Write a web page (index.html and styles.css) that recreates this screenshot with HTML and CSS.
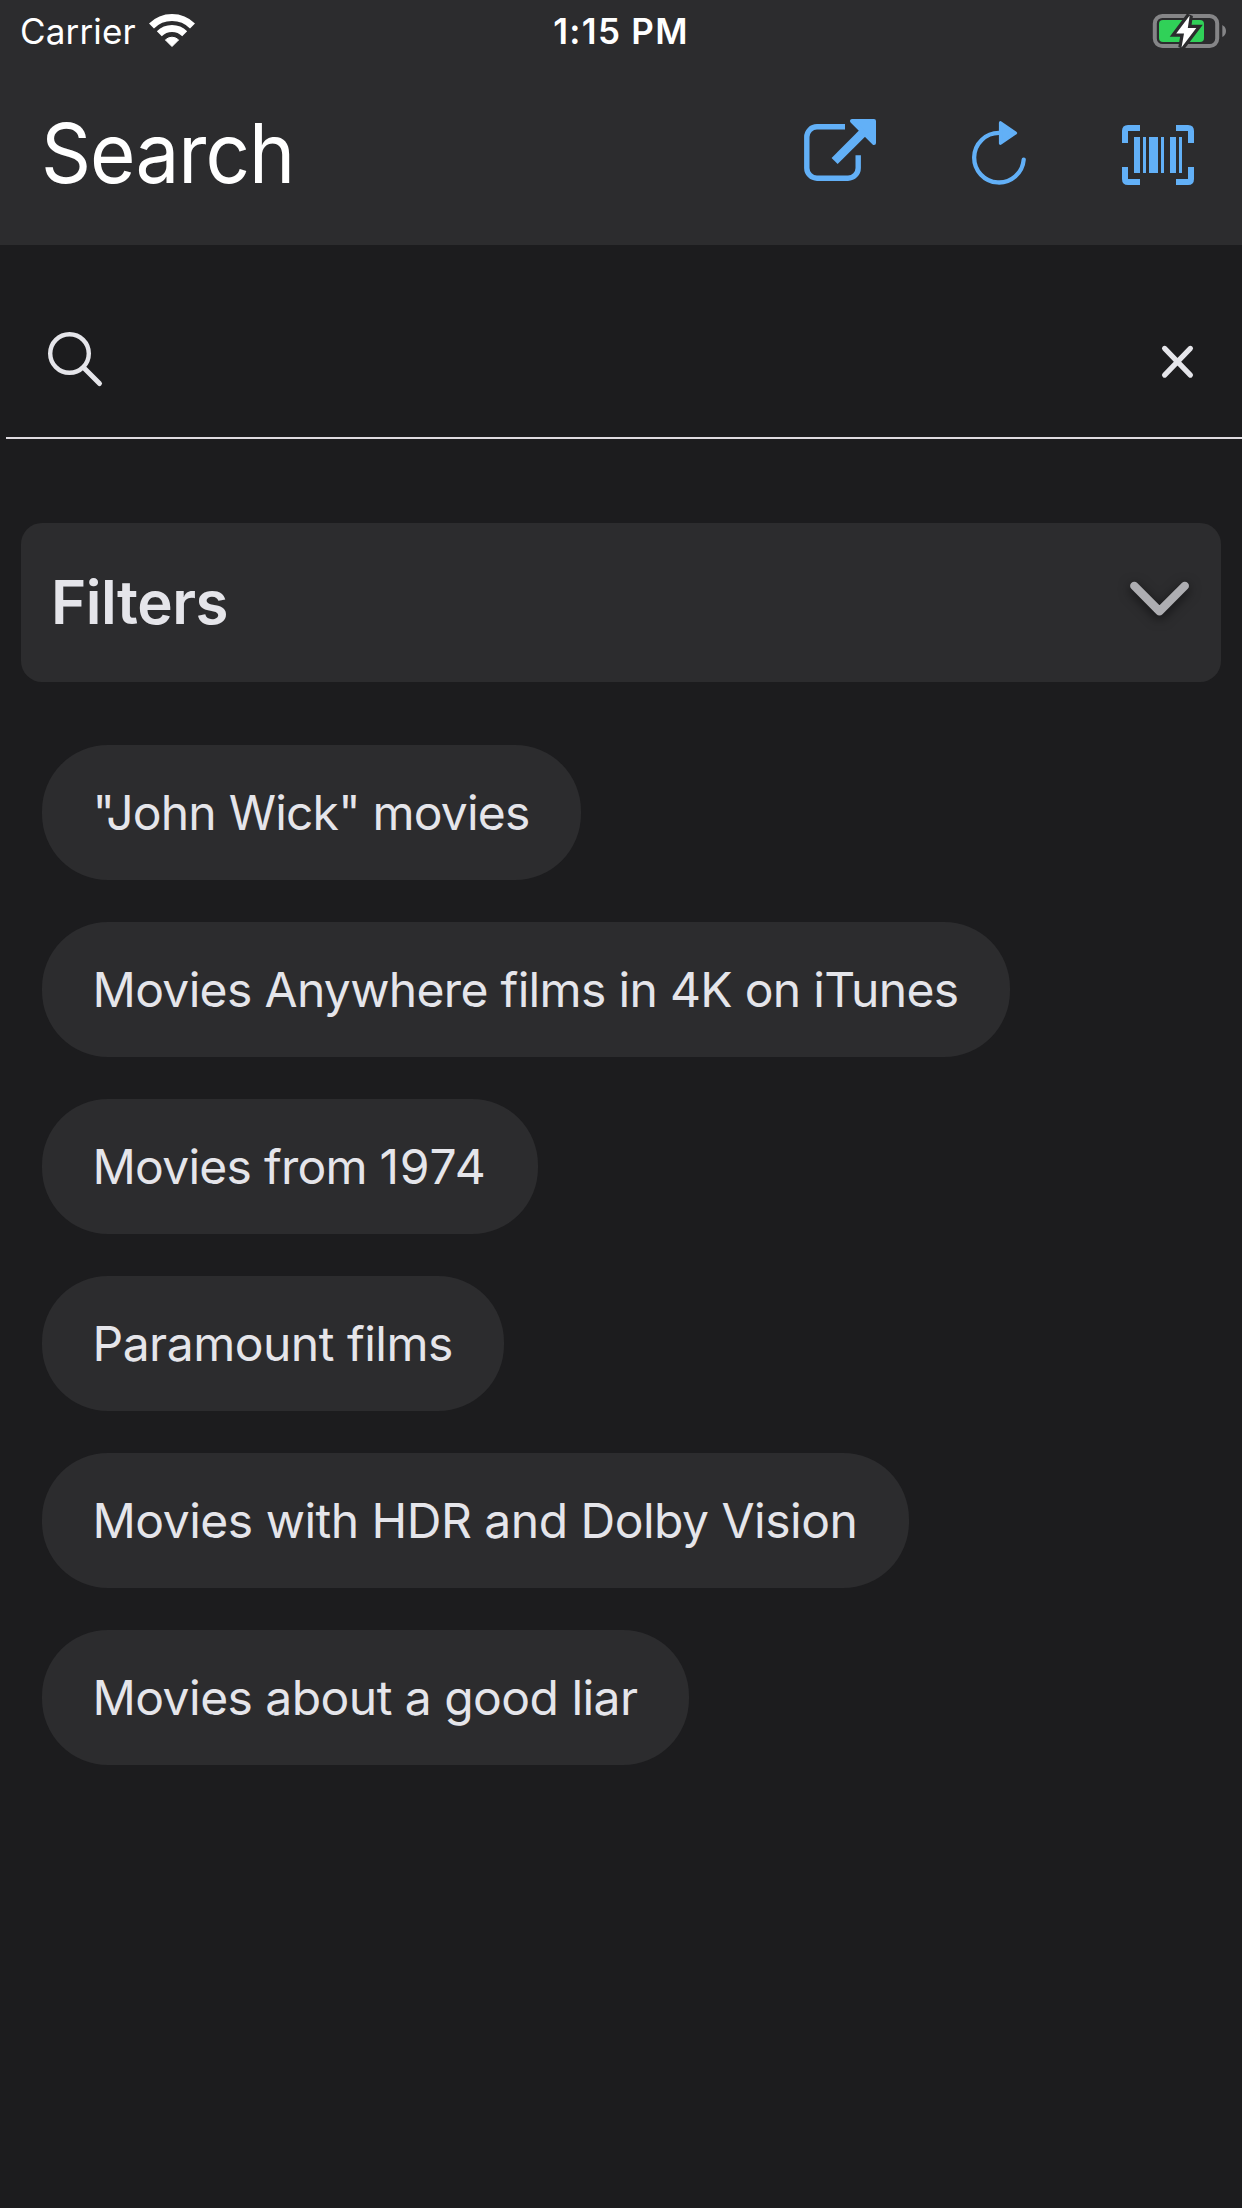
FILE: index.html
```
<!DOCTYPE html>
<html lang="en">
<head>
<meta charset="utf-8">
<title>Search</title>
<link rel="stylesheet" href="styles.css">
</head>
<body>
<header class="header">
  <div class="status">
    <div class="status-left">
      <span class="carrier">Carrier</span>
      <svg class="wifi" width="48" height="36" viewBox="148 12 48 36">
        <path d="M151.5 25A29 29 0 0 1 192.5 25M159.3 32.8A18 18 0 0 1 184.7 32.8" fill="none" stroke="#fff" stroke-width="7"/>
        <path d="M172 45.5L165.4 38.9A9.5 9.5 0 0 1 178.6 38.9Z" fill="#fff" stroke="#fff" stroke-width="1" stroke-linejoin="round"/>
      </svg>
    </div>
    <time class="clock">1:15 PM</time>
    <svg class="battery" width="76" height="38" viewBox="1152 11 76 38">
      <rect x="1154.8" y="15" width="62.4" height="30" rx="7.5" fill="none" stroke="#858587" stroke-width="4"/>
      <rect x="1159" y="19" width="45" height="22" rx="4" fill="#30d158"/>
      <path d="M1222.3 24Q1226 26 1226 30T1222.3 36Z" fill="#858587"/>
      <path d="M1189.7 14.5L1176.2 32.5H1184L1181.5 46.5L1196.3 27H1187.8Z" fill="#fff" stroke="#2c2c2e" stroke-width="6.5" paint-order="stroke"/>
    </svg>
  </div>
  <div class="nav">
    <h1 class="title">Search</h1>
    <div class="actions">
      <svg width="72" height="69" viewBox="804 118 72 69">
        <path d="M845 126.8H817A10.2 10.2 0 0 0 806.8 137V168A10.2 10.2 0 0 0 817 178.2H848A10.2 10.2 0 0 0 858.2 168V155.3" class="line" stroke-width="5.4"/>
        <path d="M834.6 161L863 132.6" class="line" stroke-width="8.6"/>
        <path d="M852 121H874V143Z" fill="#62b0f7" stroke="#62b0f7" stroke-width="4" stroke-linejoin="round"/>
      </svg>
      <svg width="54" height="69" viewBox="972 118 54 69">
        <path d="M999 132.9A24.8 24.8 0 1 0 1023.7 159.7" class="line" stroke-width="4.3" stroke-linecap="round"/>
        <path d="M1000.5 122.7L1015.5 133L1000.5 143.3Z" fill="#62b0f7" stroke="#62b0f7" stroke-width="3.2" stroke-linejoin="round"/>
      </svg>
      <svg width="72" height="69" viewBox="1122 118 72 69" shape-rendering="crispEdges">
        <path d="M1125 143V131Q1125 128 1128 128H1140M1176 128H1188Q1191 128 1191 131V143M1191 167V179Q1191 182 1188 182H1176M1140 182H1128Q1125 182 1125 179V167" class="line" stroke-width="6" shape-rendering="auto"/>
        <path d="M1134 137h6v36h-6zM1143 137h3v36h-3zM1149 137h9v36h-9zM1161 137h3v36h-3zM1170 137h6v36h-6zM1179 137h3v36h-3z" fill="#62b0f7"/>
      </svg>
    </div>
  </div>
</header>
<main>
  <div class="searchbar">
    <svg width="56" height="56" viewBox="47 331 56 56">
      <circle cx="69.5" cy="353.5" r="19.3" fill="none" stroke="#e5e5ea" stroke-width="4.4"/>
      <path d="M84 368L99.5 383.5" fill="none" stroke="#e5e5ea" stroke-width="5" stroke-linecap="round"/>
    </svg>
    <svg width="34" height="56" viewBox="1160 331 34 56">
      <path d="M1164.6 348.4L1190.4 375.1M1190.4 348.4L1164.6 375.1" fill="none" stroke="#e5e5ea" stroke-width="5.2" stroke-linecap="round"/>
    </svg>
  </div>
  <section class="filters">
    <h2 class="filters-title">Filters</h2>
    <svg class="chevron" width="60" height="36" viewBox="1130 580.5 60 36">
      <path d="M1134.3 585.4L1159.5 610.8L1184.8 585.4" fill="none" stroke="#aeaeb2" stroke-width="8.4" stroke-linecap="round" stroke-linejoin="round"/>
    </svg>
  </section>
  <div class="chips">
    <button class="chip chip-wick">"John Wick" movies</button>
    <button class="chip chip-anywhere">Movies Anywhere films in 4K on iTunes</button>
    <button class="chip chip-year">Movies from <span class="year">1974</span></button>
    <button class="chip">Paramount films</button>
    <button class="chip">Movies with HDR and Dolby Vision</button>
    <button class="chip chip-liar">Movies about a good liar</button>
  </div>
</main>
</body>
</html>
```
FILE: styles.css
```
* { box-sizing: border-box; }
body { margin: 0; min-height: 2208px; background: #1c1c1e; color: #e5e5ea; font-family: Inter, "Liberation Sans", sans-serif; }
svg { display: block; flex: none; overflow: visible; }
h1, h2 { margin: 0; }
.header { height: 245px; background: #2c2c2e; color: #fff; }
.status { height: 60px; padding: 0 14px; display: grid; grid-template-columns: 1fr auto 1fr; align-items: center; font-size: 35px; line-height: 60px; white-space: nowrap; }
.status-left { display: flex; align-items: center; gap: 12px; padding-left: 6px; }
.carrier { line-height: 62px; letter-spacing: .15px; }
.clock { font-weight: 600; line-height: 62px; letter-spacing: 1.3px; }
.battery { justify-self: end; }
.nav { height: 185px; padding: 0 48px 0 41px; display: flex; align-items: center; justify-content: space-between; }
.title { font-size: 83px; font-weight: 400; line-height: 100px; letter-spacing: -1px; transform: scaleX(.94); transform-origin: left; }
.actions { display: flex; gap: 96px; }
.line { fill: none; stroke: #62b0f7; }
.searchbar { height: 194px; margin-left: 6px; padding: 86px 48px 0 41px; display: flex; justify-content: space-between; border-bottom: 2px solid #dfdbe1; }
.filters { margin: 84px 21px 0; height: 159px; padding: 0 31px 0 30px; border-radius: 21px; background: #2c2c2e; display: flex; align-items: center; justify-content: space-between; }
.filters-title { margin-bottom: 2px; font-size: 60px; font-weight: 600; line-height: 80px; letter-spacing: -.5px; }
.chevron { margin-bottom: 8px; filter: drop-shadow(0 3px 6px rgba(0, 0, 0, .6)); }
.chips { padding: 63px 42px 0; display: flex; flex-direction: column; align-items: flex-start; gap: 42px; }
.chip { height: 135px; border: 0; border-radius: 66px; padding: 0 51.5px 0 50.5px; background: #2c2c2e; color: #e5e5ea; font: 400 48px/60px Inter, "Liberation Sans", sans-serif; letter-spacing: -.5px; white-space: nowrap; }
.chip-wick { letter-spacing: -.79px; }
.chip-anywhere { letter-spacing: -.67px; }
.chip-year { letter-spacing: -.75px; }
.year { letter-spacing: .8px; }
.chip-liar { letter-spacing: -.54px; }
```
